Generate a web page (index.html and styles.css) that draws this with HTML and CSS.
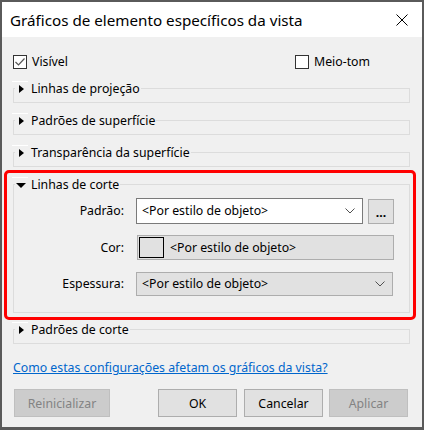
FILE: index.html
```html
<!DOCTYPE html>
<html lang="pt">
<head>
<meta charset="utf-8">
<title>Gráficos de elemento específicos da vista</title>
<link rel="stylesheet" href="styles.css">
</head>
<body>
<div class="window">
  <div class="titlebar">
    <span class="title">Gráficos de elemento específicos da vista</span>
    <svg class="close" width="12" height="12" viewBox="0 0 12 12"><path d="M0.5 0.5 L11.5 11.5 M11.5 0.5 L0.5 11.5" stroke="#000" stroke-width="1" fill="none"/></svg>
  </div>
  <div class="content">
    <div class="checks">
      <label class="check check-first"><span class="box"><svg width="12" height="12" viewBox="0 0 12 12"><path d="M1.5 6 L4.5 9 L10.5 2.5" stroke="#555" stroke-width="1.2" fill="none"/></svg></span>Visível</label>
      <label class="check"><span class="box"></span>Meio-tom</label>
    </div>

    <fieldset class="group">
      <legend><span class="arrow"><span class="tri-right"></span></span><span class="ltext">Linhas de projeção</span></legend>
    </fieldset>
    <fieldset class="group">
      <legend><span class="arrow"><span class="tri-right"></span></span><span class="ltext">Padrões de superfície</span></legend>
    </fieldset>
    <fieldset class="group">
      <legend><span class="arrow"><span class="tri-right"></span></span><span class="ltext">Transparência da superfície</span></legend>
    </fieldset>

    <div class="highlight">
      <fieldset class="group open">
        <legend><span class="arrow"><span class="tri-down"></span></span><span class="ltext">Linhas de corte</span></legend>
        <div class="row row-1">
          <span class="lbl">Padrão:</span>
          <div class="combo combo-white">
            <span class="val">&lt;Por estilo de objeto&gt;</span>
            <svg class="chev" width="10" height="6" viewBox="0 0 10 6"><path d="M0.5 0.5 L5 5 L9.5 0.5" stroke="#505050" stroke-width="1" fill="none"/></svg>
          </div>
          <div class="dots">...</div>
        </div>
        <div class="row row-2">
          <span class="lbl">Cor:</span>
          <div class="colorfield">
            <span class="swatch"></span>
            <span class="val">&lt;Por estilo de objeto&gt;</span>
          </div>
        </div>
        <div class="row row-3">
          <span class="lbl">Espessura:</span>
          <div class="combo combo-gray">
            <span class="val">&lt;Por estilo de objeto&gt;</span>
            <svg class="chev" width="10" height="6" viewBox="0 0 10 6"><path d="M0.5 0.5 L5 5 L9.5 0.5" stroke="#505050" stroke-width="1" fill="none"/></svg>
          </div>
        </div>
      </fieldset>
    </div>

    <fieldset class="group last">
      <legend><span class="arrow"><span class="tri-right"></span></span><span class="ltext">Padrões de corte</span></legend>
    </fieldset>

    <div class="linkrow"><a class="link" href="#">Como estas configurações afetam os gráficos da vista?</a></div>

    <div class="buttons">
      <button class="btn btn-reset" disabled>Reinicializar</button>
      <button class="btn btn-ok">OK</button>
      <button class="btn btn-cancel">Cancelar</button>
      <button class="btn btn-apply" disabled>Aplicar</button>
    </div>
  </div>
</div>
</body>
</html>
```
FILE: styles.css
```css
* { box-sizing: border-box; }
html, body { margin: 0; padding: 0; }
body {
  font-family: "Noto Sans", "Liberation Sans", sans-serif;
  font-size: 12.3px;
  line-height: 16px;
  color: #000;
  background: #f0f0f0;
}
.window {
  width: 424px;
  height: 430px;
  border: 2px solid #5a5a5a;
  border-bottom-width: 3px;
  display: flex;
  flex-direction: column;
  background: #f0f0f0;
}
.titlebar {
  height: 35px;
  flex: none;
  background: #fff;
  display: flex;
  align-items: center;
  padding-left: 8px;
}
.title {
  font-size: 15.2px;
  line-height: 20px;
  flex: 1;
}
.close {
  margin-right: 14px;
}
.content {
  flex: 1;
  display: flex;
  flex-direction: column;
}
.checks {
  display: flex;
  padding-top: 17px;
  padding-left: 11px;
  height: 33px;
}
.check {
  display: flex;
  align-items: center;
  height: 16px;
}
.check-first { width: 282px; }
.box {
  width: 14px;
  height: 14px;
  border: 1px solid #333;
  background: #fff;
  margin-right: 5px;
  display: flex;
  align-items: center;
  justify-content: center;
}
.group {
  margin: 10px 12px 0 11px;
  padding: 0 0 6px 0;
  border: 1px solid #dcdcdc;
  min-width: 0;
}
.group + .group { margin-top: 9px; }
.group legend {
  position: relative;
  margin-left: 1px;
  padding: 0 1px 0 0;
  height: 16px;
  display: flex;
  align-items: center;
}
.group legend::before {
  content: "";
  position: absolute;
  left: -3px;
  top: 1px;
  width: 16px;
  height: 1px;
  background: #fff;
}
.ltext { padding-top: 2px; }
.arrow {
  width: 11px;
  height: 16px;
  margin-right: 5px;
  padding-top: 2px;
  display: flex;
  align-items: center;
  justify-content: center;
}
.tri-right {
  width: 0; height: 0;
  border-top: 4px solid transparent;
  border-bottom: 4px solid transparent;
  border-left: 5px solid #000;
  margin-left: 2px;
}
.tri-down {
  width: 0; height: 0;
  border-left: 5px solid transparent;
  border-right: 5px solid transparent;
  border-top: 5px solid #000;
}
.highlight {
  margin: 3px 6px 0 2px;
  padding: 3px 3px 4px 6px;
  border: 3px solid #ff0000;
  border-radius: 5px;
}
.highlight .group { margin: 0; }
.group.open { padding: 6px 0 16px 0; }
.row {
  display: flex;
  align-items: center;
}
.row-2 { margin-top: 11px; }
.row-3 { margin-top: 12px; }
.lbl {
  width: 110px;
  text-align: right;
  margin-right: 12px;
}
.combo {
  display: flex;
  align-items: center;
  padding-left: 5px;
}
.combo .val { flex: 1; }
.combo .chev { margin-right: 7px; }
.combo-white {
  width: 227px;
  height: 26px;
  background: #fff;
  border: 1px solid #7a7a7a;
}
.combo-gray {
  width: 257px;
  height: 24px;
  background: #e1e1e1;
  border: 1px solid #adadad;
}
.dots {
  width: 26px;
  height: 25px;
  margin-left: 5px;
  background: #e1e1e1;
  border: 1px solid #adadad;
  display: flex;
  align-items: center;
  justify-content: center;
  font-weight: bold;
  padding-top: 3px;
}
.colorfield {
  width: 257px;
  height: 25px;
  margin-left: 1px;
  background: #e1e1e1;
  border: 1px solid #adadad;
  display: flex;
  align-items: center;
  padding-left: 1px;
}
.swatch {
  width: 25px;
  height: 21px;
  border: 1px solid #000;
  background: #e1e1e1;
  margin-right: 6px;
}
.group.last { margin-top: 1px; }
.linkrow {
  margin: 16px 0 0 11px;
  height: 16px;
}
.link {
  color: #0066cc;
  text-decoration: underline;
}
.buttons {
  display: flex;
  margin: 13px 0 0 12px;
}
.btn {
  font-family: "Noto Sans", "Liberation Sans", sans-serif;
  font-size: 12.3px;
  height: 28px;
  width: 79px;
  padding: 0;
  background: #e1e1e1;
  border: 1px solid #adadad;
  color: #000;
}
.btn:disabled {
  background: #cccccc;
  border-color: #bfbfbf;
  color: #838383;
}
.btn-reset { width: 96px; margin-right: 48px; }
.btn-ok { margin-right: 7px; }
.btn-cancel { margin-right: 6px; }
```
